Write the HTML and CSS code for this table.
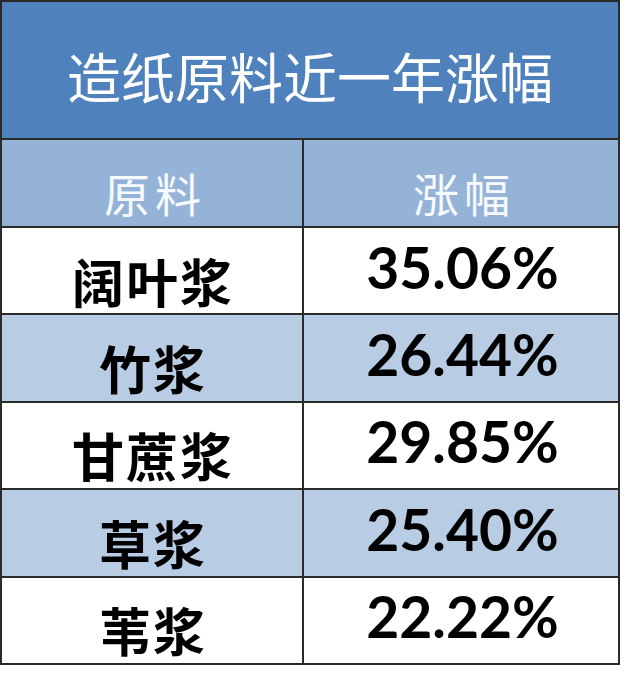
FILE: index.html
```html
<!DOCTYPE html>
<html lang="zh">
<head>
<meta charset="utf-8">
<title>造纸原料近一年涨幅</title>
<link rel="stylesheet" href="styles.css">
</head>
<body>
<table class="rates">
  <colgroup>
    <col class="col-name">
    <col class="col-rate">
  </colgroup>
  <thead>
    <tr><th class="title" colspan="2">造纸原料近一年涨幅</th></tr>
    <tr class="head"><th>原料</th><th>涨幅</th></tr>
  </thead>
  <tbody>
    <tr><td class="name">阔叶浆</td><td class="rate">35.06%</td></tr>
    <tr class="alt"><td class="name">竹浆</td><td class="rate">26.44%</td></tr>
    <tr><td class="name">甘蔗浆</td><td class="rate">29.85%</td></tr>
    <tr class="alt"><td class="name">草浆</td><td class="rate">25.40%</td></tr>
    <tr><td class="name">苇浆</td><td class="rate">22.22%</td></tr>
  </tbody>
</table>
</body>
</html>
```

FILE: styles.css
```css
html, body {
  margin: 0;
  padding: 0;
  background: #ffffff;
}

.rates {
  border-collapse: collapse;
  width: 620px;
  table-layout: fixed;
  font-family: "Noto Sans CJK SC", sans-serif;
}

.col-name { width: 302px; }

.rates th,
.rates td {
  border: 2px solid #2a2a2a;
  text-align: center;
  vertical-align: middle;
  padding: 0;
}

.title {
  height: 138px;
  background: #4f81bd;
  color: #ffffff;
  font-size: 54px;
  font-weight: 400;
  letter-spacing: 0;
  line-height: 60px;
  padding-top: 12px !important;
  box-sizing: border-box;
}

.rates .head th {
  height: 88px;
  background: #95b3d7;
  color: #f6f9fd;
  font-size: 46px;
  font-weight: 400;
  letter-spacing: 5px;
  line-height: 50px;
  padding-top: 17px;
  padding-left: 6px;
  box-sizing: border-box;
}

.rates td {
  height: 87.4px;
  box-sizing: border-box;
  color: #000000;
}

.alt td {
  background: #b8cce4;
}

.rates .name {
  font-size: 52px;
  font-weight: 700;
  line-height: 56px;
  letter-spacing: 2px;
  padding-top: 20px;
  padding-left: 2px;
}

.rates .rate {
  font-family: "Lato", "Open Sans", sans-serif;
  font-size: 57px;
  font-weight: 700;
  line-height: 60px;
  padding-bottom: 8px;
  padding-left: 3px;
}
```
